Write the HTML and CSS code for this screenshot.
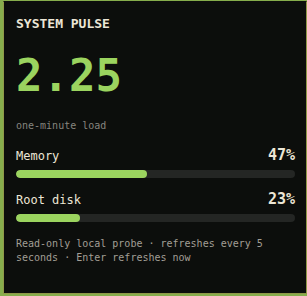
FILE: index.html
```html
<!DOCTYPE html>
<html>
<head>
<meta charset="utf-8">
<link rel="stylesheet" href="styles.css">
</head>
<body>
<section class="card">
  <h1 class="title">SYSTEM PULSE</h1>
  <div class="value">2.25</div>
  <div class="label">one-minute load</div>
  <div class="metric">
    <div class="metric-head"><span class="name">Memory</span><span class="pct">47%</span></div>
    <div class="track"><div class="fill" style="width:47%"></div></div>
  </div>
  <div class="metric">
    <div class="metric-head"><span class="name">Root disk</span><span class="pct">23%</span></div>
    <div class="track"><div class="fill" style="width:23%"></div></div>
  </div>
  <p class="note">Read-only local probe · refreshes every 5 seconds · Enter refreshes now</p>
</section>
</body>
</html>
```
FILE: styles.css
```css
html, body {
  margin: 0;
  padding: 0;
}
body {
  background: #86ad4c;
  width: 307px;
  height: 296px;
  box-sizing: border-box;
  padding: 1px 0 0 3px;
  font-family: "DejaVu Sans Mono", monospace;
}
.card {
  box-sizing: border-box;
  width: 304px;
  height: 293px;
  background: #0c0e0c;
  border: 1px solid #8f9848;
  border-top-color: #0c0e0c;
  padding: 13px 11px 10px 12px;
  display: flex;
  flex-direction: column;
}
.title {
  margin: 0;
  font-size: 13px;
  font-weight: bold;
  color: #ece6d6;
  line-height: 18px;
}
.value {
  margin-top: 21px;
  font-size: 44px;
  line-height: 44px;
  color: #9bd45f;
  font-weight: bold;
}
.label {
  margin-top: 21px;
  font-size: 10px;
  line-height: 14px;
  color: #86857f;
}
.metric {
  margin-top: 13px;
}
.metric + .metric {
  margin-top: 12px;
}
.metric-head {
  display: flex;
  justify-content: space-between;
  align-items: baseline;
  color: #ece6d6;
}
.name {
  font-size: 12px;
}
.pct {
  font-size: 15px;
  font-weight: bold;
}
.track {
  margin-top: 6px;
  height: 8px;
  border-radius: 4px;
  background: #242624;
  overflow: hidden;
}
.fill {
  height: 100%;
  border-radius: 4px;
  background: #9bd45f;
}
.note {
  margin: 15px 0 0;
  font-size: 10px;
  line-height: 14px;
  color: #a29e95;
}
```
